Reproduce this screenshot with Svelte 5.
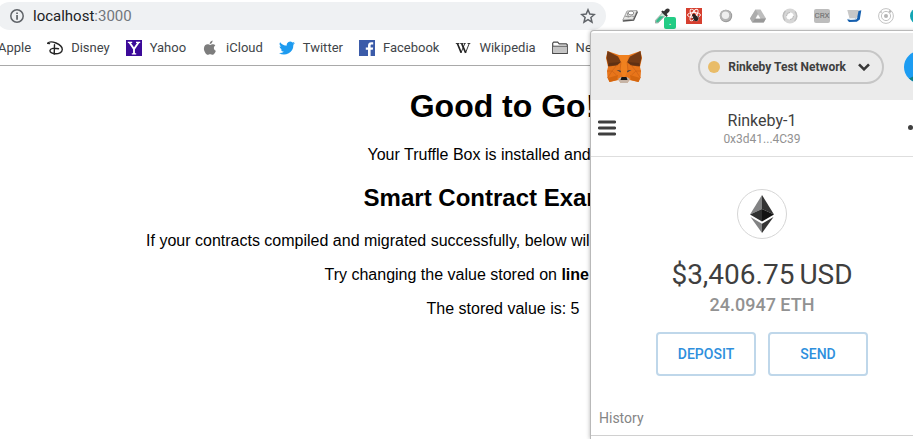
<script>
  const storedValue = 5;
</script>

<div class="window">
  <header class="chrome">
    <div class="toolbar">
      <form class="omnibox" onsubmit={(e) => e.preventDefault()}>
        <button type="button" class="plain" aria-label="Site information">
          <svg width="14" height="14" viewBox="0 0 14 14">
            <circle cx="7" cy="7" r="6.2" fill="none" stroke="#5f6368" stroke-width="1.5" />
            <path d="M6.2 3.4h1.7v1.6H6.2zM6.2 6.1h1.7v4.6H6.2z" fill="#5f6368" />
          </svg>
        </button>
        <a class="url" href="http://localhost:3000">localhost<span>:3000</span></a>
        <button type="button" class="plain" aria-label="Bookmark this page">
          <svg width="16" height="16" viewBox="0 0 16 16">
            <path d="M8 1.8l1.8 4.3 4.6.4-3.5 3 1.1 4.6L8 11.7l-4 2.4 1.1-4.6-3.5-3 4.6-.4z" fill="none" stroke="#5f6368" stroke-width="1.5" />
          </svg>
        </button>
      </form>
      <div class="extensions">
        <button class="plain" aria-label="Scratchpad">
          <svg width="16" height="16" viewBox="0 0 16 16">
            <path d="M5 3L15 2.500l-3.800 8.800L.8 12z" fill="#e6e6e4" stroke="#999" stroke-width=".8" />
            <path d="M.8 13l10.800-.8L15.500 3.500" fill="none" stroke="#555" stroke-width="1.300" />
            <path d="M3 8l3.500 1 3-1 3 .5M5 4.500l1.500 4.500" fill="none" stroke="#888" stroke-width=".9" />
            <ellipse cx="9" cy="5" rx="2.800" ry="1.900" fill="#fff" stroke="#777" stroke-width=".8" />
          </svg>
        </button>
        <button class="plain picker" aria-label="Colour picker">
          <svg width="16" height="16" viewBox="0 0 16 16">
            <path d="M8.500 4.800l2.700 2.700-7 7.300-2.700.3v-2.800z" fill="#c9ead9" stroke="#8a8a8a" stroke-width=".7" />
            <path d="M6 8.300h4l-5.800 5.900-2 .3v-2z" fill="#36b98a" />
            <path d="M7.200 3.700l1.300-1.300 1.500.9 2-2.200c1-1 2.500-.9 3.200-.1.700.8.700 2-.3 3l-2.200 2 1.100 1.700-1.300 1.300z" fill="#333" />
          </svg>
          <span class="badge">.</span>
        </button>
        <button class="plain" aria-label="React tools">
          <svg width="16" height="16" viewBox="0 0 16 16">
            <path d="M0 0h16v16H0z" fill="#d63f2f" />
            <g fill="none" stroke="#fff" stroke-width=".9">
              <ellipse cx="8" cy="7" rx="6.500" ry="2.500" />
              <ellipse cx="8" cy="7" rx="6.500" ry="2.500" transform="rotate(60 8 7)" />
              <ellipse cx="8" cy="7" rx="6.500" ry="2.500" transform="rotate(120 8 7)" />
            </g>
            <ellipse cx="9.700" cy="10.300" rx="2.300" ry="3" fill="#222" transform="rotate(-30 9.7 10.3)" />
            <circle cx="7.800" cy="7.300" r="1.500" fill="#222" />
            <path d="M6 10.500l7-2M7 12.800l6-3" stroke="#222" stroke-width=".7" />
          </svg>
        </button>
        <button class="plain" aria-label="Recorder">
          <svg width="16" height="16" viewBox="0 0 16 16">
            <circle cx="8" cy="8" r="6.200" fill="#999" />
            <circle cx="7.500" cy="7.500" r="5.800" fill="#b4b4b4" />
            <circle cx="7.500" cy="7.200" r="3.700" fill="#eee" />
          </svg>
        </button>
        <button class="plain" aria-label="Drive">
          <svg width="16" height="16" viewBox="0 0 16 16">
            <path d="M5.500 1.500h5L16 10.500l-2.300 4H2.300L0 10.500z" fill="#bdbdbd" />
            <path d="M5.500 1.500L0 10.500l2.300 4L8 5.700z" fill="#adadad" />
            <path d="M5 10.500h11l-2.300 4H2.300z" fill="#999" />
            <path d="M8 6.500l2.400 4H5.600z" fill="#fff" />
          </svg>
        </button>
        <button class="plain" aria-label="Ring">
          <svg width="16" height="16" viewBox="0 0 16 16">
            <circle cx="8" cy="8" r="5.600" fill="none" stroke="#d6d6d6" stroke-width="4" />
            <path d="M3 12.500A6.800 6.800 0 0 1 3.500 3M13 3.500a6.800 6.800 0 0 1-.5 9.500" fill="none" stroke="#bdbdbd" stroke-width="1.300" />
            <path d="M4.500 8A3.500 3.500 0 0 1 8 4.500M11.500 8A3.500 3.500 0 0 1 8 11.500" fill="none" stroke="#b5b5b5" />
          </svg>
        </button>
        <button class="plain crx">CRX</button>
        <button class="plain" aria-label="Notes">
          <svg width="16" height="16" viewBox="0 0 16 16">
            <path d="M12 3l3.300-.8-1.500 9.300-3 2.300-7.800.1-2-2.400 7.800-.3z" fill="#155fae" />
            <path d="M1.300 2h11.400l-1.700 8.500H3.500z" fill="#c8c8c8" />
            <path d="M1 10.300l8.500.2 2-1.300-1.200 2.200-5.800.6z" fill="#e8f1f8" />
          </svg>
        </button>
        <button class="plain" aria-label="Orbit">
          <svg width="16" height="16" viewBox="0 0 16 16">
            <g fill="none" stroke="#c3c3c3">
              <circle cx="8" cy="8" r="7.400" />
              <circle cx="8" cy="8" r="4.600" />
            </g>
            <circle cx="8" cy="8" r="2" fill="#b5b5b5" />
            <circle cx="12" cy="3.500" r="1.300" fill="#b5b5b5" />
            <circle cx="3" cy="4" r="1" fill="#c3c3c3" />
          </svg>
        </button>
        <button class="plain" aria-label="Profile">
          <svg width="16" height="16" viewBox="0 0 16 16"><circle cx="8" cy="8" r="8" fill="#12a5b4" /></svg>
        </button>
      </div>
    </div>

    <nav class="bookmarks" aria-label="Bookmarks">
      <a href="#apple">Apple</a>
      <a href="#disney">
        <svg width="16" height="16" viewBox="0 0 16 16">
          <path d="M.5 3.300C2 1.600 6 1.800 9 3c4 1.600 6.300 4 6.300 6.600 0 2.700-3.500 4.400-7.300 4.200-3.200-.2-5.200-1.700-5-3.400.3-2.200 4.500-2.600 8.500-1.700M.5 3.300l2 .3M7.500 4.800l-.3 9.500" fill="none" stroke="#252525" stroke-width="1.400" stroke-linecap="round" />
        </svg>
        Disney
      </a>
      <a href="#yahoo">
        <svg width="16" height="16" viewBox="0 0 16 16">
          <path d="M0 0h16v16H0z" fill="#3c0a99" />
          <path d="M3.500 2.500L8 9l4.500-6.500M8 8.500V14" fill="none" stroke="#fff" stroke-width="1.900" />
          <path d="M1.800 2.300h4.400M10 2.300h4.200M5.800 13.800h4.400" stroke="#fff" stroke-width="1.200" />
        </svg>
        Yahoo
      </a>
      <a href="#icloud">
        <svg width="16" height="16" viewBox="0 0 16 16">
          <path d="M10.600.5c.1 1.900-1.200 3.400-2.900 3.400C7.600 2.200 8.900.7 10.600.5zM13.300 5.400c-2.100 1.300-1.800 4.400.6 5.400-.7 1.900-2 4-3.300 4-.9 0-1.300-.5-2.400-.5s-1.600.5-2.400.5c-1.500 0-3.900-3.400-3.900-6.100 0-2.900 1.900-4.400 3.700-4.400 1.100 0 1.900.6 2.600.6.700 0 1.600-.6 2.900-.6.900 0 1.700.4 2.200 1.100z" fill="#7d7d7d" />
        </svg>
        iCloud
      </a>
      <a href="#twitter">
        <svg width="16" height="16" viewBox="0 0 24 24">
          <path d="M23.900 4.600c-.9.400-1.800.7-2.800.8 1-.6 1.800-1.600 2.200-2.700-1 .6-2 1-3.100 1.200a4.900 4.900 0 0 0-8.400 4.500C7.700 8.200 4.100 6.300 1.700 3.200a4.900 4.900 0 0 0 1.500 6.600c-.8 0-1.600-.2-2.200-.6v.1c0 2.400 1.700 4.400 3.900 4.800-.7.200-1.500.2-2.200.1a4.900 4.900 0 0 0 4.600 3.400A9.900 9.900 0 0 1 0 19.500 14 14 0 0 0 21.500 7.100c.9-.6 1.700-1.500 2.400-2.500z" fill="#1d9bf0" />
        </svg>
        Twitter
      </a>
      <a href="#facebook">
        <svg width="16" height="16" viewBox="0 0 16 16">
          <path d="M0 0h16v16H0z" fill="#3b5ba9" />
          <path d="M9 16V9.800H6.800V7.400H9V5.600c0-2.200 1.300-3.400 3.300-3.400.9 0 1.700.1 1.900.1v2.200h-1.300c-1.100 0-1.300.5-1.300 1.200v1.700h2.500l-.3 2.400h-2.200V16z" fill="#fff" />
        </svg>
        Facebook
      </a>
      <a href="#wikipedia">
        <svg width="16" height="16" viewBox="0 0 16 16">
          <path d="M2.500 3.800l3.700 9M6.800 3.800l3.900 9" fill="none" stroke="#222" stroke-width="1.700" />
          <path d="M6 12.800L9.600 4M10.600 12.800L14 4" fill="none" stroke="#222" stroke-width=".9" />
          <path d="M.8 3.500h3.600M5.200 3.500h3.200M8.900 3.500h1.800M12.500 3.500h2.800" stroke="#222" stroke-width=".9" />
        </svg>
        Wikipedia
      </a>
      <a href="#news">
        <svg width="16" height="16" viewBox="0 0 16 16">
          <path d="M.7 13.300V3.200l1-1h4l1.500 1.600h7.100l1 1v8.500z" fill="#fff" stroke="#4a4a4a" stroke-width="1.200" />
          <path d="M1.300 6.500h13.400v6.200H1.300z" fill="#c4c4c4" />
          <path d="M1 6.200h14" stroke="#4a4a4a" />
        </svg>
        News
      </a>
    </nav>
  </header>

  <main>
    <h1>Good to Go!</h1>
    <p>Your Truffle Box is installed and ready.</p>
    <h2>Smart Contract Example</h2>
    <p>If your contracts compiled and migrated successfully, below will show a stored value of 5 (by default).</p>
    <p>Try changing the value stored on <strong>line 40</strong> of App.js.</p>
    <p>The stored value is: {storedValue}</p>
  </main>

  <aside class="wallet" aria-label="Wallet">
    <div class="wallet-bar">
      <svg class="fox" width="36" height="34" viewBox="0 0 36 34">
        <path d="M1.500 1L13 5h10l11.500-4L36 8l-2 9 1 4-.5 7-2 4-9-2-2.500 3h-6l-2.500-3-9 2-2-4L1 21l1-4L0 8z" fill="#e8751a" />
        <path d="M1.500 1L12 6.500l3 5.500-4 3.500-8.500 1L.5 8zM34.500 1L24 6.500 21 12l4 3.500 8.500 1 2-8.500z" fill="#733a15" />
        <path d="M2 16l9-1.500L15 12 3 13zM34 16l-9-1.500L21 12l12 1z" fill="#5f3013" />
        <path d="M13 5h10l-2 7 .5 9L19 27h-2l-2.500-6 .5-9z" fill="#f0811f" />
        <path d="M2 28l10-3-1 5-7.500 2zM34 28l-10-3 1 5 7.500 2z" fill="#d4660f" />
        <path d="M11 15l-5 6 4.500 4M25 15l5 6-4.500 4M15 12l-1 8M21 12l1 8M1 21h5M35 21h-5M6 21l-4.500 7M30 21l4.500 7" fill="none" stroke="#cb6215" stroke-width=".7" />
        <path d="M10.500 20l4 .6.500 2zM25.500 20l-4 .6-.5 2z" fill="#303a47" />
        <path d="M12 29l3-2h6l3 2-2.500 4h-7z" fill="#c6b4a6" />
        <path d="M15.500 27h5l1 3h-7z" fill="#161616" />
      </svg>
      <button class="network">
        <span class="dot"></span>
        Rinkeby Test Network
        <svg width="12" height="8" viewBox="0 0 12 8"><path d="M1 1.300l5 5 5-5" fill="none" stroke="#383838" stroke-width="2.600" /></svg>
      </button>
      <button class="plain" aria-label="My accounts">
        <svg width="32" height="32" viewBox="0 0 32 32">
          <circle cx="16" cy="16" r="16" fill="#1c9cf2" />
          <path d="M5 27.500L12 24l16 2.500A16 16 0 0 1 5 27.500z" fill="#0b8288" />
        </svg>
      </button>
    </div>

    <div class="account">
      <button class="plain" aria-label="Menu">
        <svg width="18" height="16" viewBox="0 0 18 16"><path d="M1.200 2h15.600M1.200 8h15.600M1.200 14h15.600" stroke="#3f3f3f" stroke-width="2.800" stroke-linecap="round" /></svg>
      </button>
      <div class="identity">
        <div class="name">Rinkeby-1</div>
        <div class="address">0x3d41...4C39</div>
      </div>
      <button class="plain" aria-label="Account options">
        <svg width="22" height="6" viewBox="0 0 22 6"><g fill="#3f3f3f"><circle cx="2.500" cy="2.500" r="2.500" /><circle cx="10.500" cy="2.500" r="2.500" /><circle cx="18.500" cy="2.500" r="2.500" /></g></svg>
      </button>
    </div>

    <section class="balance">
      <div class="token">
        <svg width="24" height="38" viewBox="0 0 24 38">
          <path d="M12 0L0 19.500 12 14z" fill="#828384" />
          <path d="M12 0l12 19.500L12 14z" fill="#343434" />
          <path d="M0 19.500L12 14v12.500z" fill="#2f3030" />
          <path d="M24 19.500L12 14v12.500z" fill="#131313" />
          <path d="M.5 22L12 28.800V38z" fill="#828384" />
          <path d="M23.500 22L12 28.800V38z" fill="#343434" />
        </svg>
      </div>
      <div class="fiat"><span>$3,406.75</span><span>USD</span></div>
      <div class="eth">24.0947 ETH</div>
      <div class="actions">
        <button>DEPOSIT</button>
        <button>SEND</button>
      </div>
    </section>

    <h3>History</h3>
  </aside>
</div>

<style>
  :global(body) {
    margin: 0;
    background: #fff;
  }
  .window {
    position: relative;
    min-height: 100vh;
    overflow: hidden;
    font-family: Roboto, "Liberation Sans", sans-serif;
  }
  button {
    font-family: inherit;
    cursor: pointer;
  }
  .plain {
    display: block;
    flex: none;
    padding: 0;
    border: 0;
    background: none;
  }
  svg {
    display: block;
    flex: none;
  }

  .chrome {
    border-bottom: 1px solid #a9a9a9;
  }
  .toolbar {
    display: flex;
    padding-top: 2px;
  }
  .omnibox {
    display: flex;
    flex: 1;
    align-items: center;
    gap: 9px;
    height: 28px;
    margin-left: -4px;
    padding: 0 10px 0 14px;
    border-radius: 14px;
    background: #eff1f3;
  }
  .url {
    flex: 1;
    color: #202124;
    font-size: 15px;
    line-height: 20px;
    text-decoration: none;
  }
  .url span {
    color: #72777c;
  }
  .extensions {
    display: flex;
    align-items: center;
    gap: 16px;
    width: 291px;
    padding-left: 16px;
  }
  .picker {
    position: relative;
  }
  .badge {
    position: absolute;
    top: 9px;
    left: 10px;
    width: 12px;
    height: 12px;
    border-radius: 2px;
    background: #23cc85;
    color: #fff;
    font-size: 10px;
    line-height: 10px;
    text-align: center;
  }
  .plain.crx {
    width: 16px;
    height: 14px;
    border-radius: 2px;
    background: #bdbdbd;
    color: #6c6c6c;
    font-size: 8px;
    line-height: 14px;
  }

  .bookmarks {
    display: flex;
    align-items: center;
    gap: 16px;
    height: 35px;
    margin-left: -2px;
  }
  .bookmarks a {
    display: flex;
    align-items: center;
    gap: 8px;
    color: #414549;
    font-size: 13px;
    text-decoration: none;
  }

  main {
    width: calc(100% + 93px);
    padding-top: 22px;
    color: #000;
    font-family: "Liberation Sans", Arial, sans-serif;
    font-size: 16px;
    line-height: 18px;
    text-align: center;
  }
  h1 {
    margin: 0 0 21px;
    font-size: 32px;
    line-height: 37px;
  }
  h2 {
    margin: 20px 0;
    font-size: 24px;
    line-height: 28px;
  }
  p {
    margin: 0 0 16px;
  }

  .wallet {
    position: absolute;
    top: 31px;
    right: -35px;
    bottom: 0;
    box-sizing: border-box;
    width: 357px;
    padding-top: 2px;
    border-radius: 3px 0 0 0;
    background: #fff;
    box-shadow: 0 0 0 1px #b9b9b9, -1px 0 4px rgba(0, 0, 0, 0.3);
  }
  .wallet-bar {
    display: flex;
    align-items: center;
    height: 67px;
    padding: 0 12px 0 15px;
    background: #ebebeb;
  }
  .fox {
    margin-right: auto;
  }
  .network {
    display: flex;
    align-items: center;
    gap: 8px;
    height: 34px;
    margin-right: 20px;
    padding: 0 12px 0 8px;
    border: 2px solid #c6c6c6;
    border-radius: 17px;
    background: transparent;
    color: #3f3f3f;
    font-size: 12px;
    font-weight: 700;
  }
  .network svg {
    margin-left: 4px;
  }
  .dot {
    width: 12px;
    height: 12px;
    border-radius: 50%;
    background: #e9bc68;
  }
  .account {
    display: flex;
    align-items: center;
    justify-content: space-between;
    height: 56px;
    padding: 0 18px 0 7px;
    border-bottom: 1px solid #dedede;
  }
  .identity {
    text-align: center;
  }
  .name {
    color: #3f3f3f;
    font-size: 16px;
    line-height: 20px;
  }
  .address {
    color: #929292;
    font-size: 12px;
    line-height: 16px;
  }
  .identity {
    padding-top: 2px;
  }
  .balance {
    display: flex;
    flex-direction: column;
    align-items: center;
    margin-right: 15px;
    padding-top: 32px;
  }
  .token {
    display: flex;
    align-items: center;
    justify-content: center;
    box-sizing: border-box;
    width: 50px;
    height: 50px;
    border: 1px solid #d6d6d6;
    border-radius: 50%;
  }
  .fiat {
    display: flex;
    gap: 5px;
    margin-top: 18px;
    color: #3f3f3f;
    font-size: 28px;
    line-height: 36px;
  }
  .eth {
    color: #929292;
    font-size: 18px;
    font-weight: 500;
    line-height: 24px;
  }
  .actions {
    display: flex;
    gap: 12px;
    margin-top: 15px;
  }
  .actions button {
    box-sizing: border-box;
    width: 100px;
    height: 44px;
    border: 2px solid #bfd7ea;
    border-radius: 4px;
    background: #fff;
    color: #2f8fdd;
    font-size: 14px;
    font-weight: 500;
  }
  h3 {
    margin: 32px 0 0;
    padding: 0 8px 7px;
    border-bottom: 1px solid #d0d0d0;
    color: #858585;
    font-size: 14px;
    font-weight: 400;
    line-height: 20px;
  }
</style>
